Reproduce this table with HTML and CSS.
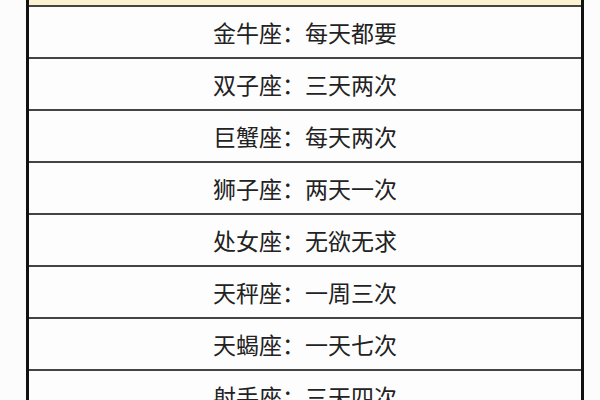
FILE: index.html
```html
<!DOCTYPE html>
<html lang="zh">
<head>
<meta charset="utf-8">
<link rel="stylesheet" href="styles.css">
</head>
<body>
<div class="table">
  <div class="row head"></div>
  <div class="row">金牛座：每天都要</div>
  <div class="row">双子座：三天两次</div>
  <div class="row">巨蟹座：每天两次</div>
  <div class="row">狮子座：两天一次</div>
  <div class="row">处女座：无欲无求</div>
  <div class="row">天秤座：一周三次</div>
  <div class="row">天蝎座：一天七次</div>
  <div class="row">射手座：三天四次</div>
</div>
</body>
</html>
```

FILE: styles.css
```css
html, body {
  margin: 0;
  padding: 0;
  background: #fcfcfd;
  overflow: hidden;
}
.table {
  margin-left: 26px;
  width: 552px;
  border-left: 3px solid #111;
  border-right: 3px solid #111;
  background: #fdfdfe;
}
.row {
  height: 50px;
  border-bottom: 2px solid #444;
  display: flex;
  align-items: center;
  justify-content: center;
  font-family: "Noto Sans CJK SC", sans-serif;
  font-size: 23px;
  color: #222;
  line-height: 1;
}
.row.head {
  height: 5px;
  background: #fbf3cf;
}
```
